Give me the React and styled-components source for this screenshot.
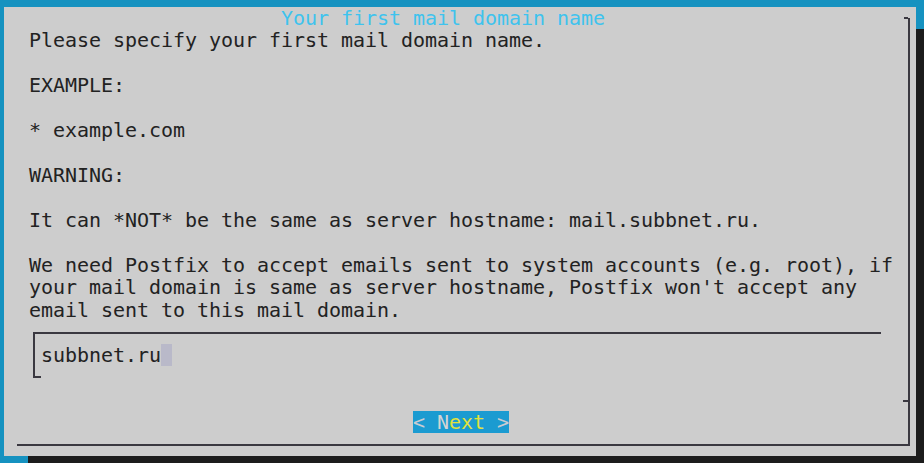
import React from "react";
import styled, { createGlobalStyle } from "styled-components";

const ROW = 22.45;

const Global = createGlobalStyle`
  html, body { margin: 0; padding: 0; background: #1692c0; }
  body { font-family: "DejaVu Sans Mono", "Liberation Mono", monospace; }
`;

const Screen = styled.div`
  width: 924px;
  height: 463px;
  overflow: hidden;
  background: #1692c0;
  padding: 7px 0 0 4px;
  box-sizing: border-box;
  font-family: "DejaVu Sans Mono", "Liberation Mono", monospace;
  font-size: 20px;
  letter-spacing: -0.04px;
`;

const Dialog = styled.div`
  width: 912px;
  height: 449px;
  background: #cdcdcd;
  box-shadow: 24px 22px 0 #1c1c1c;
  display: flex;
  box-sizing: border-box;
  padding: 11px 6px 10px 13px;
`;

const Frame = styled.div`
  position: relative;
  flex: 1;
  display: flex;
  flex-direction: column;
  box-sizing: border-box;
  border-right: 2px solid #3a3840;
  border-bottom: 2px solid #3a3840;
  &::before {
    content: "";
    position: absolute;
    top: -1px;
    right: 0;
    width: 4px;
    height: 2px;
    background: #3a3840;
  }
`;

const Title = styled.div`
  margin-top: -11px;
  height: ${ROW}px;
  line-height: ${ROW}px;
  padding-left: 264px;
  color: #3ec3ee;
  white-space: pre;
`;

const Body = styled.div`
  padding-left: 12px;
  display: flex;
  flex-direction: column;
`;

const Line = styled.div`
  height: ${ROW}px;
  line-height: ${ROW}px;
  color: #222222;
  white-space: pre;
`;

const InputBox = styled.div`
  position: relative;
  margin: 11px 0 0 16px;
  width: 848px;
  height: 46px;
  box-sizing: border-box;
  border-top: 2px solid #3a3840;
  border-left: 2px solid #3a3840;
  padding: 9.45px 0 0 6px;
  &::after {
    content: "";
    position: absolute;
    left: -2px;
    bottom: 0;
    width: 8px;
    height: 2px;
    background: #3a3840;
  }
`;

const InputText = styled.div`
  display: flex;
  height: ${ROW}px;
  line-height: ${ROW}px;
  color: #222222;
  white-space: pre;
`;

const Cursor = styled.span`
  display: inline-block;
  width: 11px;
  height: 22px;
  background: #b9b9c9;
`;

const ButtonBar = styled.div`
  position: relative;
  margin-top: 32.7px;
  height: ${ROW}px;
  padding-left: 396px;
  display: flex;
  &::before {
    content: "";
    position: absolute;
    right: 0;
    top: -11px;
    width: 5px;
    height: 2px;
    background: #3a3840;
  }
`;

const Button = styled.div`
  height: ${ROW}px;
  line-height: ${ROW}px;
  background: #1b9bd1;
  color: #c9ccd2;
  white-space: pre;
`;

const Hot = styled.span`
  color: ${(p) => (p.$accent ? "#e2e23c" : "#d4d4d4")};
`;

const lines = [
  "Please specify your first mail domain name.",
  "",
  "EXAMPLE:",
  "",
  "* example.com",
  "",
  "WARNING:",
  "",
  "It can *NOT* be the same as server hostname: mail.subbnet.ru.",
  "",
  "We need Postfix to accept emails sent to system accounts (e.g. root), if",
  "your mail domain is same as server hostname, Postfix won't accept any",
  "email sent to this mail domain.",
];

export default function App() {
  return (
    <>
      <Global />
      <Screen>
        <Dialog>
          <Frame>
            <Title>Your first mail domain name</Title>
            <Body>
              {lines.map((l, i) => (
                <Line key={i}>{l}</Line>
              ))}
            </Body>
            <InputBox>
              <InputText>
                subbnet.ru
                <Cursor />
              </InputText>
            </InputBox>
            <ButtonBar>
              <Button>
                {"< "}
                <Hot>N</Hot>
                <Hot $accent>ext</Hot>
                {" >"}
              </Button>
            </ButtonBar>
          </Frame>
        </Dialog>
      </Screen>
    </>
  );
}
